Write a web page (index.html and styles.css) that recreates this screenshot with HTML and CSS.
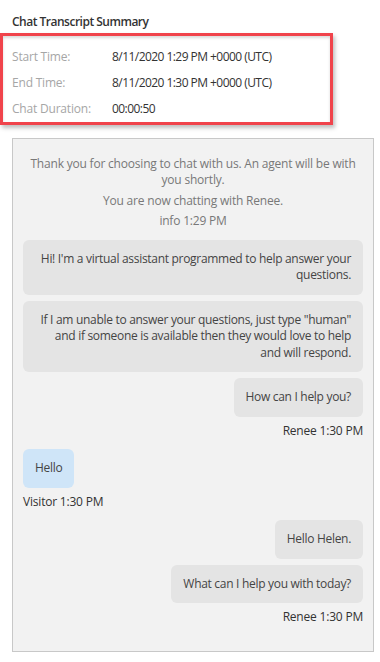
FILE: index.html
```html
<!DOCTYPE html>
<html>
<head>
  <title>Chat Transcript Summary</title>
  <link rel="stylesheet" href="styles.css">
</head>
<body>
  <h1 class="title">Chat Transcript Summary</h1>

  <div class="summary">
    <div class="summary-row">
      <span class="label">Start Time:</span>
      <span class="value">8/11/2020 1:29 PM +0000 (UTC)</span>
    </div>
    <div class="summary-row">
      <span class="label">End Time:</span>
      <span class="value">8/11/2020 1:30 PM +0000 (UTC)</span>
    </div>
    <div class="summary-row">
      <span class="label">Chat Duration:</span>
      <span class="value">00:00:50</span>
    </div>
  </div>

  <div class="transcript">
    <p class="info">Thank you for choosing to chat with us. An agent will be with you shortly.</p>
    <p class="info">You are now chatting with Renee.</p>
    <p class="info">info 1:29 PM</p>

    <div class="group agent">
      <div class="bubble">Hi! I'm a virtual assistant programmed to help answer your questions.</div>
      <div class="bubble">If I am unable to answer your questions, just type "human" and if someone is available then they would love to help<br>and will respond.</div>
      <div class="bubble">How can I help you?</div>
      <div class="meta">Renee 1:30 PM</div>
    </div>

    <div class="group visitor">
      <div class="bubble">Hello</div>
      <div class="meta">Visitor 1:30 PM</div>
    </div>

    <div class="group agent">
      <div class="bubble">Hello Helen.</div>
      <div class="bubble">What can I help you with today?</div>
      <div class="meta">Renee 1:30 PM</div>
    </div>
  </div>
</body>
</html>
```

FILE: styles.css
```css
body {
  margin: 0;
  font-family: "Segoe UI", "Open Sans", Arial, sans-serif;
  font-size: 12px;
  line-height: 16.5px;
  letter-spacing: -0.2px;
  color: #333;
  background: #fff;
}
.title {
  margin: 0;
  padding: 14px 12px 0;
  font-size: 12px;
  font-weight: 600;
  line-height: 16px;
  letter-spacing: -0.5px;
  color: #333;
}
.summary {
  width: 318px;
  margin-top: 3px;
  padding: 13px 0 4px 9px;
  border: 3px solid #f0434b;
  box-shadow: 2px 3px 4px rgba(0, 0, 0, 0.25), inset 0 2px 3px rgba(0, 0, 0, 0.15);
}
.summary-row {
  display: flex;
  margin-bottom: 9.5px;
}
.summary-row:last-child {
  margin-bottom: 0;
}
.label {
  width: 100px;
  color: #a6a6a6;
}
.value {
  letter-spacing: -0.55px;
  color: #333;
}
.transcript {
  margin: 13px 6px 0 12px;
  padding: 17px 10px 25px;
  border: 1px solid #c8c8c8;
  background: #f2f2f2;
}
.info {
  margin: 0 0 4px;
  text-align: center;
  color: #787878;
}
.info:last-of-type {
  margin-bottom: 10px;
}
.group {
  display: flex;
  flex-direction: column;
  gap: 6px;
  margin-bottom: 10px;
}
.group:last-child {
  margin-bottom: 0;
}
.agent {
  align-items: flex-end;
  text-align: right;
}
.visitor {
  align-items: flex-start;
}
.bubble {
  padding: 11px 12px;
  border-radius: 6px;
  background: #e4e4e4;
  color: #444;
  letter-spacing: -0.3px;
}
.visitor .bubble {
  background: #cfe5f8;
}
.meta {
  color: #333;
}
```
